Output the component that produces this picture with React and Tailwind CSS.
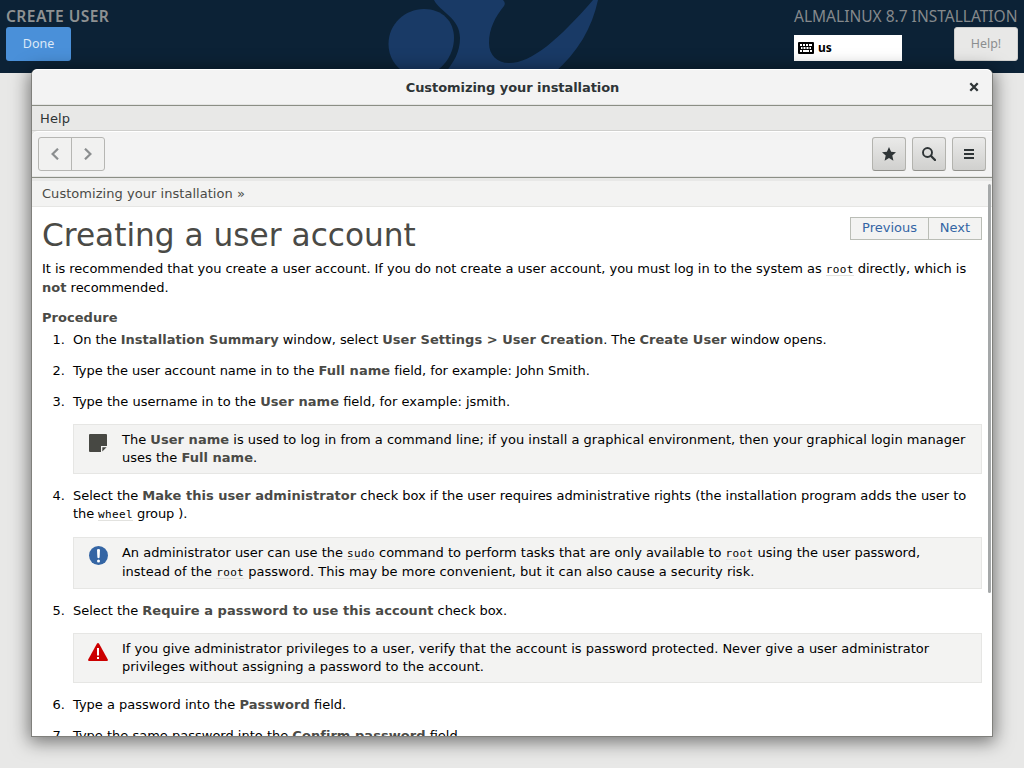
import React from "react";

const B = ({ children }) => <b className="font-bold tracking-[0.04px] text-[#4a4a46]">{children}</b>;

const Code = ({ children }) => (
  <code className="inline-block h-[16px] border-b border-[#e2e2df] align-top font-['DejaVu_Sans_Mono',monospace] text-[11px] leading-[20px] tracking-[0.35px]">
    {children}
  </code>
);

const Line = ({ track = "tracking-normal", children }) => (
  <div className={"h-[18px] leading-[18px] whitespace-nowrap " + track}>{children}</div>
);

function Item({ n, children }) {
  return (
    <div className="flex">
      <div className="w-[31px] shrink-0 pr-[8px] text-right leading-[18px]">{n}.</div>
      <div className="min-w-0 flex-1">{children}</div>
    </div>
  );
}

function Note({ icon, tall, children }) {
  return (
    <div
      className={
        "ml-[31px] mb-[13px] flex border border-[#e6e6e4] bg-[#f3f3f2] pt-[5px] " +
        (tall ? "mt-[14px] h-[52px]" : "mt-[13px] h-[50px]")
      }
    >
      <div className="w-12 shrink-0">{icon}</div>
      <div className={tall ? "flex flex-col gap-px pt-px" : "pt-px"}>{children}</div>
    </div>
  );
}

const NoteIcon = () => (
  <svg className="mt-[4px] ml-[15px]" width="18" height="18" viewBox="0 0 18 18">
    <path d="M1 0H17Q18 0 18 1V12H12V18H1Q0 18 0 17V1Q0 0 1 0Z" fill="#474843" />
    <path d="M13.3 17.6V13.3H17.6Z" fill="#474843" />
  </svg>
);

const ImportantIcon = () => (
  <svg className="mt-[3px] ml-[15px]" width="19" height="19" viewBox="0 0 19 19">
    <circle cx="9.5" cy="9.5" r="9.5" fill="#3465a4" />
    <path d="M8 4Q8 3 9.5 3T11 4L10.6 11.5Q9.5 13 8.4 11.5Z" fill="#fff" />
    <circle cx="9.5" cy="15" r="1.5" fill="#fff" />
  </svg>
);

const WarningIcon = () => (
  <svg className="mt-[4px] ml-[14px]" width="20" height="18" viewBox="0 0 20 18">
    <path d="M9 .6Q10 -.4 11 .6L19.8 16.4Q20.2 18 19 18H1Q-.2 18 .2 16.4Z" fill="#c00" />
    <path d="M9 5H11V12.5H9ZM9 14H11V16H9Z" fill="#fff" />
  </svg>
);

const ToolButton = ({ children }) => (
  <button className="flex h-[34px] w-[34px] items-center justify-center rounded-[3px] border border-[#b3b3ae] border-b-[#8f8f8a] bg-linear-to-b from-[#eaeae9] to-[#d0d0ce]">
    {children}
  </button>
);

function Header() {
  return (
    <header className="relative h-[73px] overflow-hidden bg-[#0c2236] font-['Noto_Sans',sans-serif]">
      <svg className="absolute top-0 left-[380px]" width="230" height="73" viewBox="380 0 230 73" fill="#193a66">
        <path d="M388.5 44C388.5 24 405 9 424 9C442 9 454 21 454 38C454 58 438 76 420 76C402 76 388.5 62 388.5 44Z" />
        <path d="M434 0H503Q506 3 504 6C495 17 489 29 489 43C489 55 497 63 509 63C532 63 559 39 593 0H598C592 28 578 52 554 73H445C454 62 460 52 460 38C460 18 440 12 434 0Z" />
      </svg>
      <div className="relative flex justify-between px-[6px]">
        <div>
          <h1 className="mt-[6px] h-[21px] text-[15.6px] leading-[21px] font-semibold tracking-[0.42px] whitespace-nowrap text-[#8e9192]">CREATE USER</h1>
          <button className="h-[34px] w-[65px] rounded-[3px] bg-[#4a90d9] text-[12.5px] text-[#dce9f7]">Done</button>
        </div>
        <div className="w-[224px]">
          <div className="mt-[6px] h-[21px] text-[15.53px] leading-[21px] whitespace-nowrap text-[#85898c]">ALMALINUX 8.7 INSTALLATION</div>
          <div className="flex justify-between">
            <div className="mt-2 flex h-[26px] w-[108px] items-center gap-1 bg-white pl-1">
              <svg width="16" height="12" viewBox="0 0 16 12">
                <rect width="16" height="12" rx="1" fill="#000" />
                <path
                  d="M2 3H4M5 3H7M8 3H10M11 3H14M3 6H4.5M5.5 6H7.5M8.5 6H10.5M11.5 6H13M2 9H4M5 9H11M12 9H14"
                  stroke="#fff"
                  strokeWidth="1.8"
                />
              </svg>
              <span className="text-[12px] leading-none font-bold text-black">us</span>
            </div>
            <button className="h-[34px] w-[64px] rounded-[3px] border border-[#d0d0ce] bg-[#e8e8e7] text-[12.4px] text-[#8b8e8f]">Help!</button>
          </div>
        </div>
      </div>
    </header>
  );
}

function HelpPage() {
  return (
    <main className="relative h-[529px] overflow-hidden bg-white pl-[10px] text-[13px] text-black">
      <div className="flex h-[53px] justify-between pr-[10px]">
        <h2 className="text-[31.2px] leading-[57px] whitespace-nowrap text-[#4a4a46]">Creating a user account</h2>
        <nav className="mt-[10px] flex h-[23px] border border-[#babdb6] bg-[#f3f3f2] text-center leading-[20px] text-[#3465a4]">
          <a className="w-[77px]">Previous</a>
          <a className="w-[53px] border-l border-[#babdb6]">Next</a>
        </nav>
      </div>
      <Line track="tracking-[-0.039px]">It is recommended that you create a user account. If you do not create a user account, you must log in to the system as <Code>root</Code> directly, which is</Line>
      <div className="pt-px"><Line track="tracking-[-0.04px]"><B>not</B> recommended.</Line></div>
      <div className="mt-[12px] mb-1"><Line><B>Procedure</B></Line></div>
      <div className="pr-[10px]">
        <Item n="1"><Line track="tracking-[-0.06px]">On the <B>Installation Summary</B> window, select <B>User Settings &gt; User Creation</B>. The <B>Create User</B> window opens.</Line></Item>
        <div className="h-[13px]" />
        <Item n="2"><Line track="tracking-[-0.055px]">Type the user account name in to the <B>Full name</B> field, for example: John Smith.</Line></Item>
        <div className="h-[13px]" />
        <Item n="3"><Line>Type the username in to the <B>User name</B> field, for example: jsmith.</Line></Item>
        <Note icon={<NoteIcon />}>
          <Line track="tracking-[0.005px]">The <B>User name</B> is used to log in from a command line; if you install a graphical environment, then your graphical login manager</Line>
          <Line>uses the <B>Full name</B>.</Line>
        </Note>
        <Item n="4">
          <Line track="tracking-[-0.035px]">Select the <B>Make this user administrator</B> check box if the user requires administrative rights (the installation program adds the user to</Line>
          <Line track="tracking-[-0.1px]">the <Code>wheel</Code> group ).</Line>
        </Item>
        <Note tall icon={<ImportantIcon />}>
          <Line track="tracking-[-0.025px]">An administrator user can use the <Code>sudo</Code> command to perform tasks that are only available to <Code>root</Code> using the user password,</Line>
          <Line>instead of the <Code>root</Code> password. This may be more convenient, but it can also cause a security risk.</Line>
        </Note>
        <Item n="5"><Line track="tracking-[-0.04px]">Select the <B>Require a password to use this account</B> check box.</Line></Item>
        <Note icon={<WarningIcon />}>
          <Line track="tracking-[-0.014px]">If you give administrator privileges to a user, verify that the account is password protected. Never give a user administrator</Line>
          <Line track="tracking-[-0.014px]">privileges without assigning a password to the account.</Line>
        </Note>
        <Item n="6"><Line>Type a password into the <B>Password</B> field.</Line></Item>
        <div className="h-[13px]" />
        <Item n="7"><Line>Type the same password into the <B>Confirm password</B> field.</Line></Item>
      </div>
    </main>
  );
}

function HelpWindow() {
  return (
    <section className="relative mx-[31px] -mt-1 flex h-[668px] flex-col rounded-t-[6px] border-x border-b border-[#80807c] bg-white shadow-[0_3px_18px_2px_rgba(0,0,0,0.5)]">
      <div className="flex h-[37px] shrink-0 items-center rounded-t-[6px] border-t border-b border-t-white border-b-[#8b8e85] bg-[#f3f3f3] text-[#2e3436] shadow-[inset_0_-1px_#e4e4e3]">
        <div className="w-[37px]" />
        <h2 className="flex-1 text-center text-[13px] font-bold tracking-[-0.06px]">Customizing your installation</h2>
        <button className="flex w-[36px] justify-center pb-px">
          <svg width="10" height="10" viewBox="0 0 10 10">
            <path d="M1.3 1.3 8.7 8.7M8.7 1.3 1.3 8.7" stroke="#2e3436" strokeWidth="2.3" />
          </svg>
        </button>
      </div>
      <div className="h-[25px] shrink-0 border-b border-[#cfcfcd] bg-[#e8e8e7] pl-2 text-[13px] leading-[25px] tracking-[0.1px] text-[#2e3436]">Help</div>
      <div className="h-[47px] shrink-0 bg-[#e8e8e7]">
        <div className="flex h-[47px] items-start justify-between rounded-tl-[6px] border-t border-b border-t-white border-b-[#8b8e85] bg-[#f3f3f3] px-[6px] pt-[5px] shadow-[inset_0_-1px_#e4e4e3]">
          <div className="flex h-[34px] w-[67px] rounded-[3px] border border-[#b6b6b3] bg-[#f1f1f0]">
            <button className="flex w-[33px] items-center justify-center border-r border-[#b6b6b3]">
              <svg width="8" height="12" viewBox="0 0 8 12"><path d="M7 .7 1.6 6 7 11.3" fill="none" stroke="#8b8e8f" strokeWidth="2.2" /></svg>
            </button>
            <button className="flex w-[31px] items-center justify-center">
              <svg width="8" height="12" viewBox="0 0 8 12"><path d="M1 .7 6.4 6 1 11.3" fill="none" stroke="#8b8e8f" strokeWidth="2.2" /></svg>
            </button>
          </div>
          <div className="flex gap-[6px]">
            <ToolButton>
              <svg width="14" height="14" viewBox="0 0 14 14"><path d="M7 0 9.1 4.7 14 5.2 10.3 8.6 11.4 13.7 7 11 2.6 13.7 3.7 8.6 0 5.2 4.9 4.7Z" fill="#2e3436" /></svg>
            </ToolButton>
            <ToolButton>
              <svg width="14" height="14" viewBox="0 0 14 14" fill="none" stroke="#2e3436">
                <circle cx="5.5" cy="5.5" r="4.5" strokeWidth="1.9" />
                <path d="M8.8 8.8 13 13" strokeWidth="2.3" strokeLinecap="round" />
              </svg>
            </ToolButton>
            <ToolButton>
              <svg width="10" height="10" viewBox="0 0 10 10"><path d="M0 1H10M0 5H10M0 9H10" stroke="#2e3436" strokeWidth="2" /></svg>
            </ToolButton>
          </div>
        </div>
      </div>
      <div className="h-[29px] shrink-0 border-t-[3px] border-b border-t-[#e8e8e7] border-b-[#e6e6e4] bg-[#f3f3f2] pl-[10px] text-[13px] leading-[25px] tracking-[0.04px] text-[#4a4a46]">Customizing your installation »</div>
      <HelpPage />
      <div className="absolute top-[115px] right-[1px] h-[409px] w-[3px] rounded-full bg-[#a5a8a9]" />
    </section>
  );
}

export default function App() {
  return (
    <div className="h-[768px] w-[1024px] overflow-hidden bg-[#e8e8e7] font-['DejaVu_Sans',sans-serif]">
      <Header />
      <HelpWindow />
    </div>
  );
}
